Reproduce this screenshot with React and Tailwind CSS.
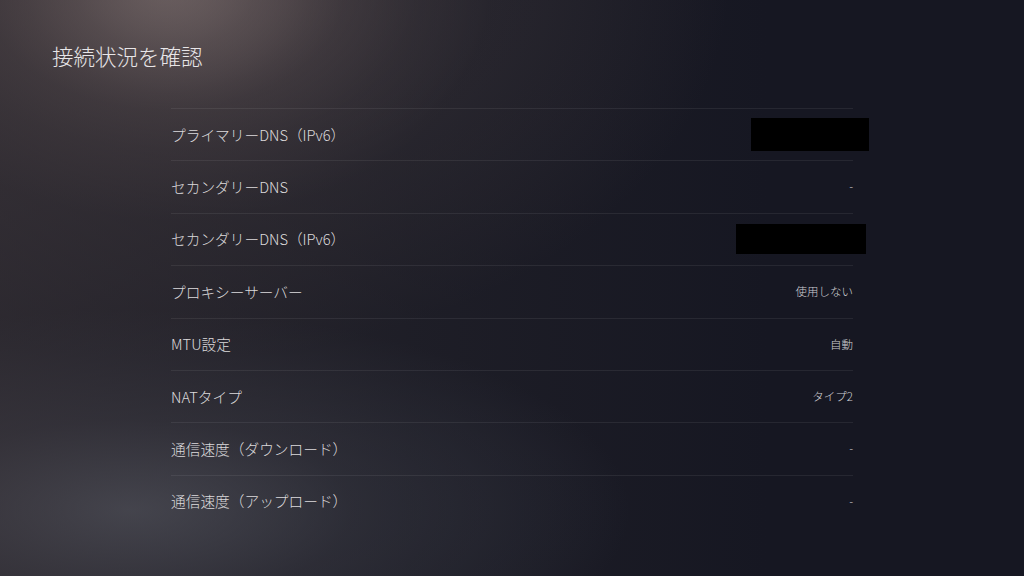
export default function App() {
  const rows = [
    { label: "プライマリーDNS（IPv6）", box: "w-[118px] h-[33px] mr-[-16px]" },
    { label: "セカンダリーDNS", value: "-" },
    { label: "セカンダリーDNS（IPv6）", box: "w-[130px] h-[30px] mr-[-13px]" },
    { label: "プロキシーサーバー", value: "使用しない" },
    { label: "MTU設定", value: "自動" },
    { label: "NATタイプ", value: "タイプ2" },
    { label: "通信速度（ダウンロード）", value: "-" },
    { label: "通信速度（アップロード）", value: "-" },
  ];
  return (
    <div
      className="relative w-[1024px] h-[576px] overflow-hidden bg-[#161722] text-[#d6d4d6]"
      style={{ fontFamily: '"Noto Sans CJK JP", "Noto Sans", sans-serif' }}
    >
      <div className="absolute inset-0 bg-[radial-gradient(ellipse_180px_120px_at_165px_-10px,rgba(215,195,190,0.8),rgba(170,150,148,0.35)_50%,rgba(0,0,0,0)_100%)]" />
      <div className="absolute inset-0 bg-[radial-gradient(ellipse_320px_230px_at_170px_-10px,rgba(190,170,165,0.6),rgba(140,120,118,0.3)_45%,rgba(0,0,0,0)_100%)]" />
      <div className="absolute inset-0 bg-[radial-gradient(ellipse_560px_380px_at_170px_-20px,rgba(140,120,118,0.55),rgba(90,78,80,0.3)_45%,rgba(0,0,0,0)_100%)]" />
      <div className="absolute inset-0 bg-[radial-gradient(ellipse_500px_200px_at_130px_510px,rgba(105,112,126,0.75),rgba(75,80,94,0.4)_45%,rgba(0,0,0,0)_100%)]" />
      <div className="absolute inset-0 bg-[linear-gradient(90deg,rgba(58,52,56,0.6)_0%,rgba(42,40,46,0.4)_40%,rgba(0,0,0,0)_75%)]" />
      <div className="relative">
        <div className="pl-[52px] pt-[41px] h-[108px] text-[21.5px] leading-[30px] font-light text-[#e8e6e8]">
          接続状況を確認
        </div>
        <div className="ml-[171px] w-[682px]">
          {rows.map((r, i) => (
            <div
              key={i}
              className="flex items-center justify-between h-[52.4px] border-t border-[rgba(255,255,255,0.07)]"
            >
              <span className="text-[14.7px] font-light text-[#dcdadc]">{r.label}</span>
              {r.box ? (
                <div className={`bg-black ${r.box}`} />
              ) : (
                <span className="text-[11.5px] font-light text-[#cfcfd3]">{r.value}</span>
              )}
            </div>
          ))}
        </div>
      </div>
    </div>
  );
}
